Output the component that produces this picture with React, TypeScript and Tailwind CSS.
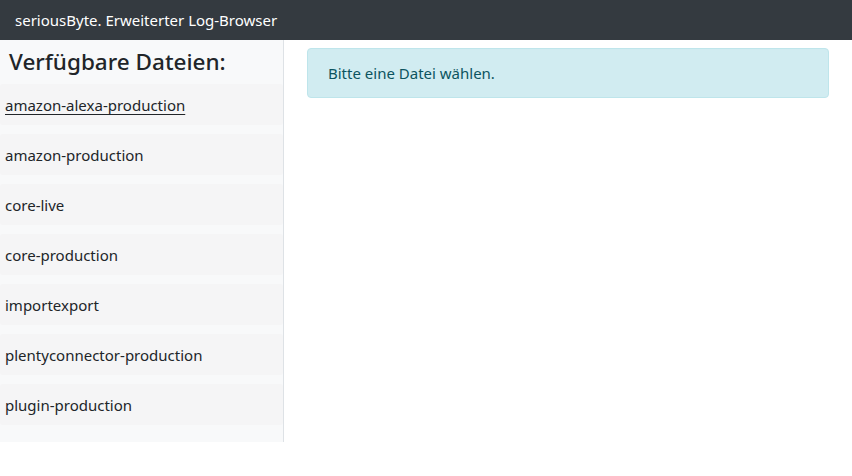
const files = [
  "amazon-alexa-production",
  "amazon-production",
  "core-live",
  "core-production",
  "importexport",
  "plentyconnector-production",
  "plugin-production",
];

const FileRow = ({ name, active }: { name: string; active?: boolean }) => {
  return (
    <div className="h-[41px] mb-[9px] flex items-center pl-[5px] pt-[2px] bg-[#f5f5f6] rounded-[3px]">
      <span className={active ? "underline underline-offset-[3px]" : ""}>{name}</span>
    </div>
  );
};

export default function App() {
  return (
    <div
      className="w-[852px] h-[476px] bg-white text-[#212529] text-[15px]"
      style={{ fontFamily: '"Segoe UI", "Noto Sans", sans-serif' }}
    >
      <nav className="h-10 bg-[#343a40] flex items-center px-[15px] text-white">
        seriousByte. Erweiterter Log-Browser
      </nav>

      <div className="flex items-start">
        <aside className="w-[284px] bg-[#f8f9fa] border-r border-[#dee2e6] pb-2">
          <h4 className="h-[44px] flex items-center pl-[9px] text-[22.5px] font-medium">
            Verfügbare Dateien:
          </h4>
          {files.map((f, i) => (
            <FileRow key={f} name={f} active={i === 0} />
          ))}
        </aside>

        <main className="flex-1 px-[23px] pt-2">
          <div className="h-[50px] flex items-center px-5 pt-[1px] bg-[#d1ecf1] border border-[#bee5eb] rounded text-[#0c5460]">
            Bitte eine Datei wählen.
          </div>
        </main>
      </div>
    </div>
  );
}
